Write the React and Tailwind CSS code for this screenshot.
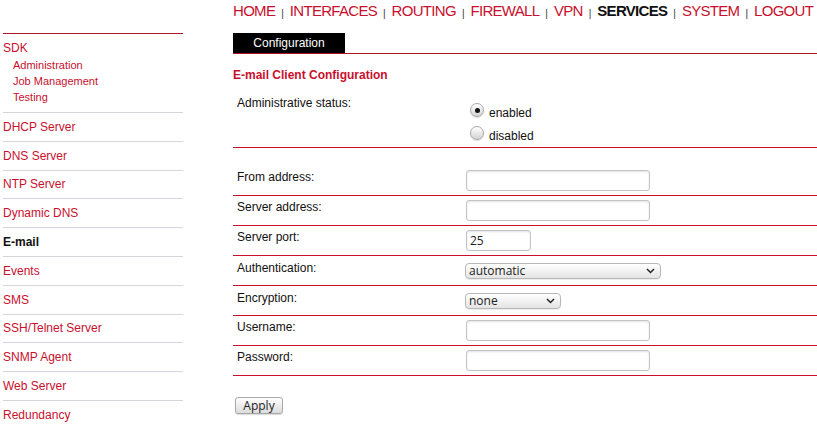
import React from "react";

const RED = "text-[#c8102e]";

const sideItems = [
  { label: "DHCP Server" },
  { label: "DNS Server" },
  { label: "NTP Server" },
  { label: "Dynamic DNS" },
  { label: "E-mail", active: true },
  { label: "Events" },
  { label: "SMS" },
  { label: "SSH/Telnet Server" },
  { label: "SNMP Agent" },
  { label: "Web Server" },
  { label: "Redundancy" },
];

const navItems = ["HOME", "INTERFACES", "ROUTING", "FIREWALL", "VPN", "SERVICES", "SYSTEM", "LOGOUT"];

const TextBox = ({ width = "w-[184px]", value = "" }) => (
  <div
    className={`${width} h-[21px] rounded-[3px] border border-[#c4c4c4] bg-white shadow-[inset_0_1px_2px_rgba(0,0,0,0.12)] px-[3px] text-[12px] leading-[19px] text-[#222] font-['Open_Sans',sans-serif]`}
  >
    {value}
  </div>
);

const Select = ({ width, value }) => (
  <div
    className={`${width} h-[16px] rounded-[4px] border border-[#b8b8b8] bg-gradient-to-b from-white to-[#e4e4e4] shadow-[0_1px_1px_rgba(0,0,0,0.08)] flex items-center justify-between pl-[3px] pr-[5px] text-[12px] leading-[14px] text-[#222] font-['Open_Sans',sans-serif]`}
  >
    <span>{value}</span>
    <svg width="9" height="6" viewBox="0 0 9 6">
      <path d="M1 1l3.5 3.5L8 1" fill="none" stroke="#222" strokeWidth="1.5" />
    </svg>
  </div>
);

const Radio = ({ checked }) => (
  <div className="w-[14px] h-[14px] rounded-full border border-[#a8a8a8] bg-gradient-to-b from-white to-[#d4d4d4] shadow-[0_1px_1px_rgba(0,0,0,0.15)] flex items-center justify-center">
    {checked && <div className="w-[5px] h-[5px] rounded-full bg-[#111]" />}
  </div>
);

const Row = ({ label, children, first, select }) => (
  <div className={`flex border-b border-[#c8102e] ${first ? "h-[48px] pt-[22px]" : select ? "h-[30px] pt-[5px]" : "h-[30px] pt-[4px]"}`}>
    <div className="w-[233px] pl-[4px] text-[12px] leading-[14px] text-[#111]">{label}</div>
    <div className={select ? "pt-[2px] -ml-[1px]" : ""}>{children}</div>
  </div>
);

const App = () => {
  return (
    <div className="w-[817px] h-[424px] bg-white overflow-hidden flex font-['Liberation_Sans',Arial,sans-serif]">
      {/* sidebar */}
      <div className="w-[180px] ml-[3px] shrink-0">
        <div className="h-[33px]" />
        <div className="border-t border-[#b0122b] pt-[6px] pb-[7px]">
          <div className={`text-[12px] leading-[16px] ${RED}`}>SDK</div>
          <div className={`pl-[10px] mt-[1px] text-[11px] leading-[16px] ${RED}`}>
            <div>Administration</div>
            <div>Job Management</div>
            <div>Testing</div>
          </div>
        </div>
        {sideItems.map((item) => (
          <div
            key={item.label}
            className={`border-t border-[#d4d4dc] h-[28.8px] flex items-center text-[12px] ${
              item.active ? "font-bold text-[#111]" : RED
            }`}
          >
            {item.label}
          </div>
        ))}
      </div>

      {/* main */}
      <div className="ml-[50px] flex-1">
        <div className="h-[33px] flex items-start pt-[2px] text-[15px] leading-[18px] tracking-[-0.7px] whitespace-nowrap">
          {navItems.map((n, i) => (
            <React.Fragment key={n}>
              {i > 0 && (
                <span className="mx-[6px] mt-[6px] text-[10px] leading-[12px] tracking-normal text-[#333]">|</span>
              )}
              <span className={n === "SERVICES" ? "font-bold text-[#111]" : RED}>{n}</span>
            </React.Fragment>
          ))}
        </div>

        <div className="border-b border-[#b0122b]">
          <div className="w-[112px] h-[20px] bg-black text-white text-[12px] leading-[20px] text-center">
            Configuration
          </div>
        </div>

        <div className={`mt-[14px] text-[12px] leading-[14px] font-bold ${RED}`}>E-mail Client Configuration</div>

        <div className="mt-[7px] flex border-b border-[#c8102e]">
          <div className="w-[233px] pl-[4px] pt-[7px] text-[12px] leading-[14px] text-[#111]">Administrative status:</div>
          <div className="pt-[14px] pl-[4px] text-[12px] leading-[14px] text-[#111]">
            <div className="h-[23px] flex items-start">
              <Radio checked />
              <span className="ml-[5px] mt-[3px]">enabled</span>
            </div>
            <div className="h-[21px] flex items-start">
              <Radio />
              <span className="ml-[5px] mt-[3px]">disabled</span>
            </div>
          </div>
        </div>

        <Row label="From address:" first>
          <TextBox />
        </Row>
        <Row label="Server address:">
          <TextBox />
        </Row>
        <Row label="Server port:">
          <TextBox width="w-[65px]" value="25" />
        </Row>
        <Row label="Authentication:" select>
          <Select width="w-[196px]" value="automatic" />
        </Row>
        <Row label="Encryption:" select>
          <Select width="w-[96px]" value="none" />
        </Row>
        <Row label="Username:">
          <TextBox />
        </Row>
        <Row label="Password:">
          <TextBox />
        </Row>

        <button className="mt-[21px] ml-[2px] w-[48px] h-[17px] rounded-[3px] border border-[#a8a8a8] bg-gradient-to-b from-white to-[#dcdcdc] shadow-[0_1px_1px_rgba(0,0,0,0.15)] text-[12px] leading-[15px] text-[#222] font-['Open_Sans',sans-serif]">
          Apply
        </button>
      </div>
    </div>
  );
};

export default App;
